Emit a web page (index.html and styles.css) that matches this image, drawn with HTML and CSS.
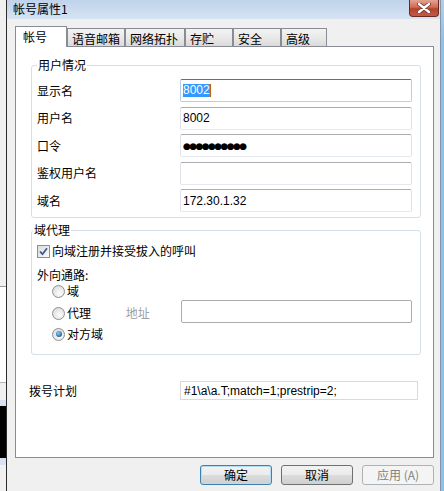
FILE: index.html
```html
<!DOCTYPE html>
<html lang="zh-CN">
  <head>
    <meta charset="UTF-8" />
    <title>帐号属性1</title>
    <link rel="stylesheet" href="styles.css">
  </head>
  <body>
    <div class="screen">
      <!-- strip of the window behind -->
      <div class="side">
        <div class="side-gray"></div>
        <div class="side-white"></div>
        <div class="side-gray2"></div>
        <div class="side-blue"></div>
        <div class="side-black"></div>
        <div class="side-blue2"></div>
        <div class="side-rest"></div>
      </div>

      <div class="dialog">
        <div class="titlebar">
          <span class="title">帐号属性1</span>
          <div class="close">
            <svg width="14" height="10" viewBox="0 0 14 10">
              <path d="M2 1 L12 9 M12 1 L2 9" stroke="#6b3a34" stroke-width="4" stroke-linecap="round" />
              <path d="M2 1 L12 9 M12 1 L2 9" stroke="#ffffff" stroke-width="2.4" stroke-linecap="round" />
            </svg>
          </div>
        </div>

        <div class="tabs">
          <div class="tab active">帐号</div>
          <div class="tab w58">语音邮箱</div>
          <div class="tab w60">网络拓扑</div>
          <div class="tab w48">存贮</div>
          <div class="tab w48">安全</div>
          <div class="tab w46">高级</div>
        </div>

        <div class="panel">
          <fieldset class="group user-group">
            <legend>用户情况</legend>
            <div class="form-grid">
              <span class="lbl">显示名</span>
              <div class="field focus"><span class="sel">8002</span><span class="caret"></span></div>
              <span class="lbl">用户名</span>
              <div class="field">8002</div>
              <span class="lbl">口令</span>
              <div class="field pwd">●●●●●●●●●●</div>
              <span class="lbl">鉴权用户名</span>
              <div class="field"></div>
              <span class="lbl">域名</span>
              <div class="field">172.30.1.32</div>
            </div>
          </fieldset>

          <fieldset class="group proxy-group">
            <legend>域代理</legend>
            <div class="check-row">
              <span class="checkbox">
                <svg width="9" height="9" viewBox="0 0 9 9">
                  <path d="M1 4.5 L3.5 7.2 L8 1.2" fill="none" stroke="#3a5a94" stroke-width="1.8" />
                </svg>
              </span>
              <span>向域注册并接受拔入的呼叫</span>
            </div>
            <div class="out-label">外向通路:</div>
            <div class="radio-row first">
              <span class="radio"></span><span>域</span>
            </div>
            <div class="radio-row addr-row">
              <div class="radio-part"><span class="radio"></span><span>代理</span></div>
              <span class="addr">地址</span>
              <div class="field plain"></div>
            </div>
            <div class="radio-row last">
              <span class="radio on"></span><span>对方域</span>
            </div>
          </fieldset>

          <div class="dial-row">
            <span class="dial-lbl">拨号计划</span>
            <div class="field dial">#1\a\a.T;match=1;prestrip=2;</div>
          </div>
        </div>

        <div class="buttons">
          <div class="btn default">确定</div>
          <div class="btn">取消</div>
          <div class="btn disabled">应用 (A)</div>
        </div>
      </div>

      <div class="edge"></div>
    </div>
  </body>
</html>
```

FILE: styles.css
```css
body {
  margin: 0;
  font-family: "Noto Sans CJK SC", "Liberation Sans", sans-serif;
  font-size: 12px;
  line-height: 14px;
  color: #000;
  background: #f0f0f0;
}
.screen {
  display: flex;
  width: 444px;
  height: 491px;
  overflow: hidden;
}

/* window behind */
.side {
  width: 6px;
  display: flex;
  flex-direction: column;
}
.side-gray {
  height: 286px;
  background: #f0f0f0;
  border-bottom: 1px solid #9c9c9c;
}
.side-white {
  height: 95px;
  background: #fff;
  border-bottom: 1px solid #b4b4b4;
}
.side-gray2 {
  height: 17px;
  background: #f0f0f0;
}
.side-blue {
  height: 6px;
  background: #d6e3f1;
}
.side-black {
  height: 52px;
  background: #000;
}
.side-blue2 {
  height: 7px;
  background: #d6e3f1;
}
.side-rest {
  flex: 1;
  background: #f0f0f0;
}
.edge {
  flex: 1;
  background: linear-gradient(#b9cde4, #8cc3ec 40px, #8cc3ec);
}

/* dialog frame */
.dialog {
  width: 433px;
  border-left: 1px solid #2c2c2c;
  border-right: 1px solid #8596ab;
  background: #f0f0f0;
  display: flex;
  flex-direction: column;
}
.titlebar {
  height: 19px;
  display: flex;
  justify-content: space-between;
  align-items: flex-start;
  background: linear-gradient(#bfd3eb, #d6e3f2);
}
.title {
  margin: 2px 0 0 6px;
  font-size: 12px;
  line-height: 14px;
}
.close {
  width: 28px;
  height: 16px;
  margin-right: 1px;
  border: 1px solid #6b2a22;
  border-top: none;
  border-radius: 0 0 4px 4px;
  background: linear-gradient(#e4a394, #d06a55 45%, #b8412c 55%, #c45a44);
  display: flex;
  align-items: center;
  justify-content: center;
}

/* tabs */
.tabs {
  display: flex;
  align-items: flex-end;
  height: 20px;
  margin-top: 7px;
  padding-left: 8px;
}
.tab {
  box-sizing: border-box;
  height: 18px;
  padding: 3px 0 0 4px;
  border: 1px solid #898c95;
  border-bottom: none;
  background: linear-gradient(#f3f3f3, #e9e9e9 50%, #dadada);
}
.tab.active {
  width: 52px;
  height: 21px;
  padding: 3px 0 0 7px;
  margin-bottom: -1px;
  background: #fff;
  position: relative;
  z-index: 1;
}
.w58 { width: 58px; }
.w60 { width: 60px; }
.w48 { width: 48px; }
.w46 { width: 46px; }

/* panel */
.panel {
  box-sizing: border-box;
  width: 419px;
  height: 412px;
  margin-left: 8px;
  border: 1px solid #898c95;
  background: #fff;
}
.group {
  width: 390px;
  box-sizing: border-box;
  margin: 0 0 0 15px;
  border: 1px solid #d5dfe5;
  border-radius: 3px;
  min-inline-size: 0;
}
.group legend {
  padding: 0 1px;
  line-height: 14px;
}
.user-group {
  margin-top: 11px;
  padding: 7px 8px 5px 5px;
}
.proxy-group {
  margin-top: 5px;
  padding: 7px 8px 13px 5px;
}
.proxy-group legend {
  margin-left: -4px;
}
.form-grid {
  display: grid;
  grid-template-columns: 143px 232px;
  grid-auto-rows: 23px;
  row-gap: 4.5px;
  align-items: center;
}
.field {
  box-sizing: border-box;
  height: 23px;
  padding: 0 0 0 2px;
  display: flex;
  align-items: center;
  font-family: "Liberation Sans", sans-serif;
  font-size: 12px;
  border: 1px solid #e2e3ea;
  border-top-color: #abadb3;
  border-bottom-color: #e3e9ef;
  border-radius: 2px;
  background: #fff;
}
.field.focus {
  border-color: #b5cfe7;
  border-top-color: #3d7bad;
}
.sel {
  background: #3399ff;
  color: #fff;
  line-height: 13px;
}
.caret {
  width: 1px;
  height: 13px;
  background: #c06010;
}
.pwd {
  font-family: "DejaVu Sans", sans-serif;
  font-size: 9px;
  letter-spacing: -1.6px;
}

/* proxy group */
.check-row {
  display: flex;
  align-items: center;
  gap: 2px;
  height: 14px;
}
.checkbox {
  box-sizing: border-box;
  width: 13px;
  height: 13px;
  border: 1px solid #8e8f8f;
  background: linear-gradient(135deg, #dcdcdc, #fafafa);
  display: flex;
  align-items: center;
  justify-content: center;
}
.out-label {
  margin-top: 10px;
  height: 14px;
}
.radio-row {
  display: flex;
  align-items: center;
  gap: 2px;
  padding-left: 15px;
  height: 14px;
}
.radio-row.first {
  margin-top: 2px;
}
.radio-row.addr-row {
  margin-top: 2px;
  height: 23px;
  gap: 0;
}
.radio-row.last {
  margin-top: 4px;
}
.radio-part {
  width: 74px;
  display: flex;
  align-items: center;
  gap: 2px;
  padding-top: 3px;
}
.radio {
  box-sizing: border-box;
  width: 13px;
  height: 13px;
  border: 1px solid #8e8f8f;
  border-radius: 50%;
  background: radial-gradient(circle at 60% 65%, #fdfdfd, #d4d4d4);
  display: flex;
  align-items: center;
  justify-content: center;
}
.radio.on::after {
  content: "";
  width: 6px;
  height: 6px;
  border-radius: 50%;
  background: radial-gradient(circle at 40% 35%, #8fd0f8, #1d69a8 70%, #0d3f73);
}
.addr {
  width: 55px;
  color: #a0a0a0;
  padding-top: 3px;
}
.field.plain {
  width: 232px;
  border: 1px solid #ababab;
  border-radius: 2px;
}

/* dial plan */
.dial-row {
  display: flex;
  align-items: center;
  margin-top: 26px;
  padding-left: 13px;
}
.dial-lbl {
  width: 151px;
}
.field.dial {
  width: 238px;
  height: 19px;
  padding-left: 3px;
  border: 1px solid #dadada;
  border-radius: 0;
}

/* buttons */
.buttons {
  display: flex;
  justify-content: flex-end;
  gap: 9px;
  margin-top: 7px;
  padding-right: 6px;
}
.btn {
  box-sizing: border-box;
  width: 72px;
  height: 20px;
  border: 1px solid #707070;
  border-radius: 3px;
  background: linear-gradient(#f2f2f2, #ebebeb 50%, #dddddd 50%, #cfcfcf);
  display: flex;
  align-items: center;
  justify-content: center;
}
.btn.default {
  border-color: #3c7fb1;
  box-shadow: inset 0 0 0 1px #b4dcf5;
}
.btn.disabled {
  border-color: #adb2b5;
  background: #f4f4f4;
  color: #838383;
}
```
